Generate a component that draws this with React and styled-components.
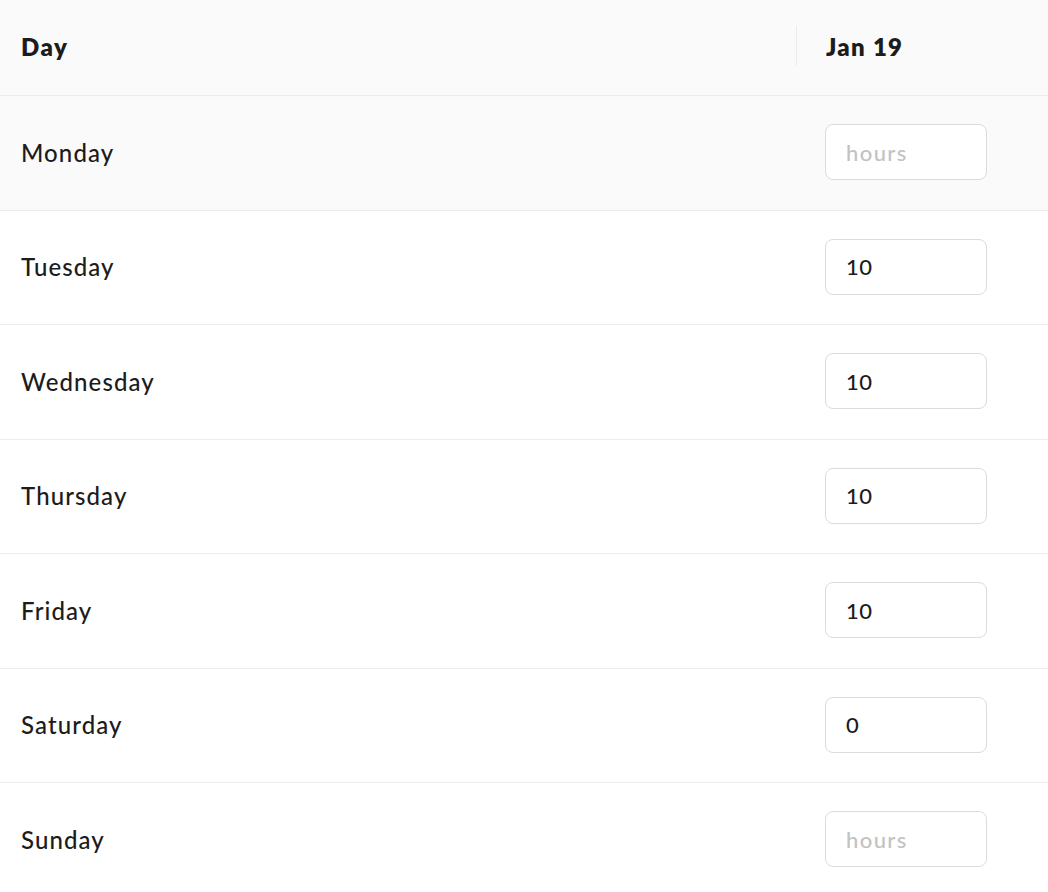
import React from "react";
import styled, { createGlobalStyle } from "styled-components";

const Global = createGlobalStyle`
  body {
    margin: 0;
    background: #fff;
    font-family: Lato, "Noto Sans", sans-serif;
    color: #1c1c1c;
  }
`;

const Table = styled.div`
  width: 1048px;
`;

const Row = styled.div`
  display: grid;
  grid-template-columns: 796px 1fr;
  align-items: center;
  box-sizing: border-box;
  height: ${(p) => (p.head ? "96px" : "114.5px")};
  padding-bottom: ${(p) => (p.head ? "3px" : "1px")};
  border-bottom: 1px solid #ececec;
  background: ${(p) => (p.shaded ? "#fafafa" : "#fff")};
`;

const DayCell = styled.div`
  padding-left: 21px;
  font-size: 24px;
  letter-spacing: ${(p) => (p.head ? "1.5px" : "1.1px")};
  font-weight: ${(p) => (p.head ? 800 : 500)};
`;

const DateCell = styled.div`
  position: relative;
  padding-left: 30px;
  font-size: 24px;
  letter-spacing: 1.3px;
  font-weight: 800;

  &::before {
    content: "";
    position: absolute;
    left: 0;
    top: 50%;
    transform: translateY(-50%);
    width: 1px;
    height: 40px;
    background: #ececec;
  }
`;

const InputCell = styled.div`
  padding-left: 29px;
`;

const Hours = styled.input`
  box-sizing: border-box;
  width: 162px;
  height: 56px;
  border: 1px solid #dcdcdc;
  border-radius: 8px;
  background: #fff;
  padding: 0 20px;
  font-family: inherit;
  font-size: 22px;
  letter-spacing: 0.6px;
  font-weight: 500;
  color: #1c1c1c;
  outline: none;

  &::placeholder {
    color: #c2c2c2;
    letter-spacing: 1.4px;
  }
`;

const days = [
  ["Monday", ""],
  ["Tuesday", "10"],
  ["Wednesday", "10"],
  ["Thursday", "10"],
  ["Friday", "10"],
  ["Saturday", "0"],
  ["Sunday", ""],
];

export default function App() {
  return (
    <>
      <Global />
      <Table>
        <Row head shaded>
          <DayCell head>Day</DayCell>
          <DateCell>Jan 19</DateCell>
        </Row>
        {days.map(([name, value], i) => (
          <Row key={name} shaded={i === 0}>
            <DayCell>{name}</DayCell>
            <InputCell>
              <Hours placeholder="hours" defaultValue={value} />
            </InputCell>
          </Row>
        ))}
      </Table>
    </>
  );
}
